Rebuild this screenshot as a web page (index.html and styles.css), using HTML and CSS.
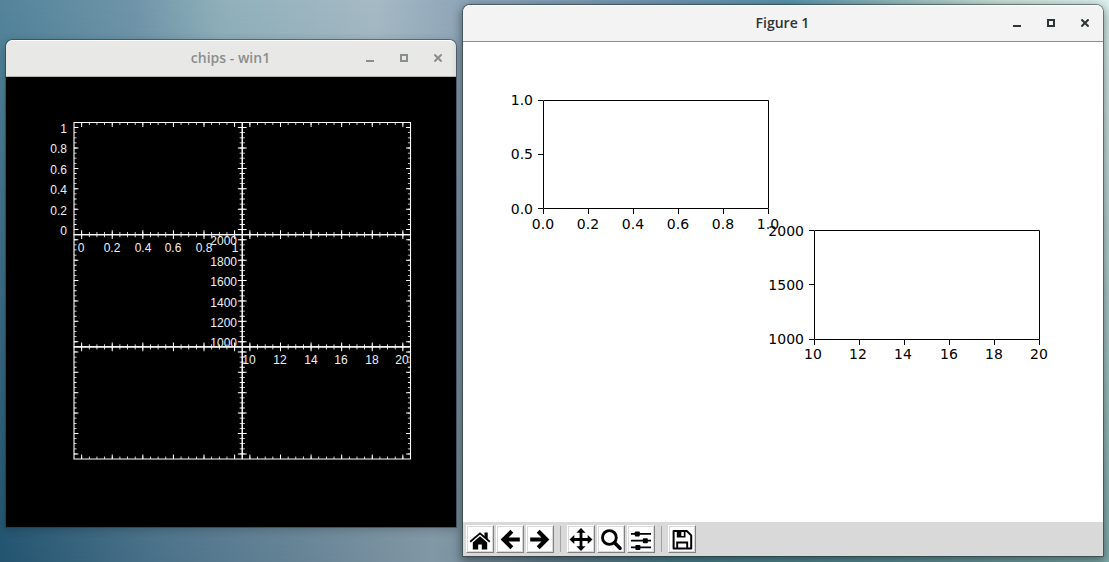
FILE: index.html
```html
<!DOCTYPE html>
<html lang="en">
<head>
<meta charset="utf-8">
<title>Desktop</title>
<link rel="stylesheet" href="styles.css">
</head>
<body>
<main class="desktop">
  <section class="window window-back" aria-label="chips - win1">
    <header class="titlebar">
      <h2 class="title">chips - win1</h2>
      <div class="controls">
        <button class="control" type="button" aria-label="Minimize"><svg width="8" height="8" viewBox="0 0 8 8"><path d="M0 7h8" stroke="currentColor" stroke-width="2"/></svg></button>
        <button class="control" type="button" aria-label="Maximize"><svg width="8" height="8" viewBox="0 0 8 8"><path d="M1 1h6v6H1z" fill="none" stroke="currentColor" stroke-width="2"/></svg></button>
        <button class="control" type="button" aria-label="Close"><svg width="8" height="8" viewBox="0 0 8 8"><path d="M.4 .4l7.2 7.2M7.6 .4L.4 7.6" stroke="currentColor" stroke-width="2"/></svg></button>
      </div>
    </header>
    <svg class="plot plot-dark" viewBox="0 0 450 450" role="img" aria-label="Grid of six plots">
      <defs>
        <g id="panel" fill="none" stroke="#fff">
          <path stroke-width="1.1" d="M0 0H168.25V112.17H0z"/>
          <g stroke-width="2.6" stroke-dasharray=".8 6.848">
            <path d="M7.25 1.3H161.2"/>
            <path d="M7.25 110.87H161.2"/>
          </g>
          <g stroke-width="4.4" stroke-dasharray="1 29.59">
            <path d="M7.15 2.2H161.3"/>
            <path d="M7.15 109.97H161.3"/>
          </g>
          <g stroke-width="2.6" stroke-dasharray=".8 4.299">
            <path d="M1.3 4.7V107.7"/>
            <path d="M166.95 4.7V107.7"/>
          </g>
          <g stroke-width="4.4" stroke-dasharray="1 19.395">
            <path d="M2.2 4.6V107.8"/>
            <path d="M166.05 4.6V107.8"/>
          </g>
        </g>
      </defs>
      <use href="#panel" x="68" y="45.5"/>
      <use href="#panel" x="236.25" y="45.5"/>
      <use href="#panel" x="68" y="157.67"/>
      <use href="#panel" x="236.25" y="157.67"/>
      <use href="#panel" x="68" y="269.83"/>
      <use href="#panel" x="236.25" y="269.83"/>
      <g text-anchor="end">
        <text x="61" y="56">1</text>
        <text x="61" y="76">0.8</text>
        <text x="61" y="97">0.6</text>
        <text x="61" y="117">0.4</text>
        <text x="61" y="138">0.2</text>
        <text x="61" y="158">0</text>
        <text x="231" y="168">2000</text>
        <text x="231" y="189">1800</text>
        <text x="231" y="209">1600</text>
        <text x="231" y="230">1400</text>
        <text x="231" y="250">1200</text>
        <text x="231" y="270">1000</text>
      </g>
      <g text-anchor="middle">
        <text x="75" y="175">0</text>
        <text x="106" y="175">0.2</text>
        <text x="137" y="175">0.4</text>
        <text x="167" y="175">0.6</text>
        <text x="198" y="175">0.8</text>
        <text x="229" y="175">1</text>
        <text x="243" y="287">10</text>
        <text x="274" y="287">12</text>
        <text x="305" y="287">14</text>
        <text x="335" y="287">16</text>
        <text x="366" y="287">18</text>
        <text x="396" y="287">20</text>
      </g>
    </svg>
  </section>

  <section class="window window-front" aria-label="Figure 1">
    <header class="titlebar">
      <h2 class="title">Figure 1</h2>
      <div class="controls">
        <button class="control" type="button" aria-label="Minimize"><svg width="8" height="8" viewBox="0 0 8 8"><path d="M0 7h8" stroke="currentColor" stroke-width="2"/></svg></button>
        <button class="control" type="button" aria-label="Maximize"><svg width="8" height="8" viewBox="0 0 8 8"><path d="M1 1h6v6H1z" fill="none" stroke="currentColor" stroke-width="2"/></svg></button>
        <button class="control" type="button" aria-label="Close"><svg width="8" height="8" viewBox="0 0 8 8"><path d="M.4 .4l7.2 7.2M7.6 .4L.4 7.6" stroke="currentColor" stroke-width="2"/></svg></button>
      </div>
    </header>
    <svg class="plot plot-light" viewBox="0 0 640 480" role="img" aria-label="Two empty axes">
      <g fill="none" stroke="#000" stroke-width="1">
        <path d="M80.5 58.5H305.5V166.5H80.5z"/>
        <path d="M75 58.5h5M75 112.5h5M75 166.5h5M80.5 167v5M125.5 167v5M170.5 167v5M215.5 167v5M260.5 167v5M305.5 167v5"/>
        <path d="M351.5 188.5H576.5V297.5H351.5z"/>
        <path d="M346 188.5h5M346 242.5h5M346 297.5h5M351.5 298v5M396.5 298v5M441.5 298v5M486.5 298v5M531.5 298v5M576.5 298v5"/>
      </g>
      <g text-anchor="end">
        <text x="70" y="63">1.0</text>
        <text x="70" y="117">0.5</text>
        <text x="70" y="172">0.0</text>
        <text x="341" y="194">2000</text>
        <text x="341" y="248">1500</text>
        <text x="341" y="302">1000</text>
      </g>
      <g text-anchor="middle">
        <text x="80" y="187">0.0</text>
        <text x="125" y="187">0.2</text>
        <text x="170" y="187">0.4</text>
        <text x="215" y="187">0.6</text>
        <text x="260" y="187">0.8</text>
        <text x="305" y="187">1.0</text>
        <text x="350" y="317">10</text>
        <text x="395" y="317">12</text>
        <text x="440" y="317">14</text>
        <text x="486" y="317">16</text>
        <text x="531" y="317">18</text>
        <text x="576" y="317">20</text>
      </g>
    </svg>
    <div class="toolbar" role="toolbar" aria-label="Figure tools">
      <button class="tool" type="button" aria-label="Home"><svg class="icon" viewBox="0 0 24 24"><path d="M12 9.2L4.8 15.4V22.5H10.2V17.5H13.8V22.5H19.2V15.4z"/><path d="M2.2 14.8L12 6.4L21.8 14.8" fill="none" stroke="#000" stroke-width="1.9"/><path d="M16.5 5.5h3.2v7.2l-3.2-2.7z"/></svg></button>
      <button class="tool" type="button" aria-label="Back"><svg class="icon" viewBox="0 0 24 24"><path d="M13.8 4.3L5.6 12.5L13.8 20.7M6 12.5H21.8" fill="none" stroke="#000" stroke-width="4.2"/></svg></button>
      <button class="tool" type="button" aria-label="Forward"><svg class="icon" viewBox="0 0 24 24"><path d="M10.2 4.3L18.4 12.5L10.2 20.7M18 12.5H2.2" fill="none" stroke="#000" stroke-width="4.2"/></svg></button>
      <span class="separator"></span>
      <button class="tool" type="button" aria-label="Pan"><svg class="icon" viewBox="0 0 24 24"><path d="M12 1L16.6 5.8H13.4V11.1H18.7V7.9L23.5 12.5L18.7 17.1V13.9H13.4V19.2H16.6L12 24L7.4 19.2H10.6V13.9H5.3V17.1L.5 12.5L5.3 7.9V11.1H10.6V5.8H7.4z"/></svg></button>
      <button class="tool" type="button" aria-label="Zoom"><svg class="icon" viewBox="0 0 24 24" fill="none" stroke="#000"><circle cx="10.4" cy="10.5" r="6.9" stroke-width="2.9"/><path d="M15.6 15.8L21 21.2" stroke-width="3.6" stroke-linecap="round"/></svg></button>
      <button class="tool" type="button" aria-label="Configure subplots"><svg class="icon" viewBox="0 0 24 24"><path d="M2 6h20v1.7H2zM2 12.8h20v1.7H2zM2 19.6h20v1.7H2z"/><rect x="5.8" y="4.4" width="5" height="5" rx=".8"/><rect x="13.8" y="11.2" width="5" height="5" rx=".8"/><rect x="6.4" y="18" width="5" height="5" rx=".8"/></svg></button>
      <span class="separator"></span>
      <button class="tool" type="button" aria-label="Save"><svg class="icon" viewBox="0 0 24 24"><path d="M3.6 4H16.8L21.2 8.4V21.6H3.6z" fill="none" stroke="#000" stroke-width="2" stroke-linejoin="round"/><path fill-rule="evenodd" d="M6.8 3.5H15.5V10.4H6.8zM11.3 4.9V8.9H13.8V4.9z"/><path d="M7.2 21.5V15.5H17.2V21.5" fill="none" stroke="#000" stroke-width="1.9"/></svg></button>
    </div>
  </section>
</main>
</body>
</html>
```

FILE: styles.css
```css
* {
  box-sizing: border-box;
}

body {
  margin: 0;
}

.desktop {
  position: relative;
  isolation: isolate;
  display: flex;
  align-items: flex-start;
  gap: 7px;
  min-height: 100vh;
  padding: 5px 6px 6px;
  overflow: hidden;
  background: linear-gradient(to right, #54859b 0%, #7095a9 12%, #90b1bb 20%, #a6bac5 34%, #91a7ba 41%, #7294b4 60%, #5993ae 71%, #8fb5b8 80%, #c8dcd4 90%, #dcf0ee 100%);
}

.desktop::before {
  content: "";
  position: absolute;
  inset: 0;
  z-index: -1;
  background: linear-gradient(to right, #22536f 0%, #4a7189 14%, #688496 28%, #8197a4 39%, #64818f 50%, #4c8490 62%, #5d9098 80%, #80abab 100%);
  mask-image: linear-gradient(to bottom, transparent, #000);
}

.window {
  min-width: 0;
  border-radius: 7px 7px 0 0;
}

.window-back {
  flex: 450 1 0;
  margin-top: 35px;
  box-shadow: 0 0 0 1px rgba(30, 50, 60, 0.5), 0 2px 8px 1px rgba(0, 0, 0, 0.2);
}

.window-front {
  flex: 640 1 0;
  box-shadow: 0 0 0 1px rgba(30, 50, 45, 0.5), 0 3px 10px 2px rgba(0, 0, 0, 0.4);
}

.titlebar {
  display: grid;
  grid-template-columns: 1fr auto 1fr;
  align-items: center;
  height: 37px;
  padding-right: 1px;
  border-radius: 7px 7px 0 0;
  border-bottom: 1px solid #8b8e8b;
  background: #f3f3f3;
  color: #2e3436;
  box-shadow: inset 0 1px #fff;
}

.window-back .titlebar {
  border-bottom-color: #b4b8b3;
  background: #e8e8e6;
  color: #8b8e8f;
}

.title {
  grid-column: 2;
  margin: 0;
  font: 600 14px/18px "Open Sans", "Noto Sans", sans-serif;
}

.controls {
  display: flex;
  justify-self: end;
}

.control {
  display: grid;
  place-items: center;
  width: 34px;
  height: 34px;
  padding: 0;
  border: 0;
  background: none;
  color: inherit;
}

.plot {
  display: block;
  width: 100%;
  height: auto;
}

.plot-dark {
  background: #000;
  fill: #f0f0f0;
  font: 12px "Liberation Sans", Arial, sans-serif;
}

.plot-light {
  background: #fff;
  fill: #000;
  font: 14px "DejaVu Sans", sans-serif;
}

.toolbar {
  display: flex;
  gap: 2px;
  padding: 3px;
  background: #d9d9d9;
}

.tool {
  display: grid;
  place-items: center;
  width: 28px;
  height: 28px;
  padding: 0;
  border: 1px solid;
  border-color: #fff #828282 #828282 #fff;
  background: #fff;
  box-shadow: inset 0 0 0 1px #d9d9d9;
}

.icon {
  width: 24px;
  height: 24px;
}

.separator {
  width: 1px;
  margin: 1px 4px;
  background: #a3a3a3;
}
```
